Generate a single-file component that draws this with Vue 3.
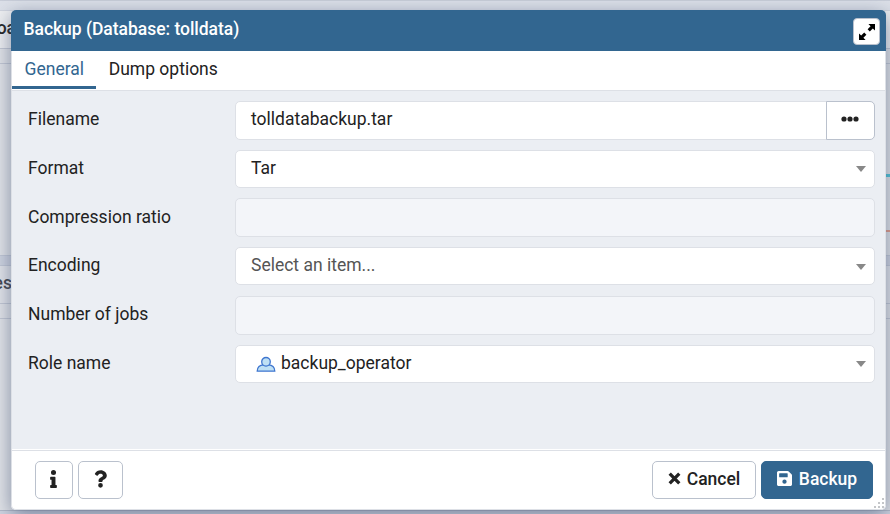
<script setup>
import { ref } from 'vue'

const tabs = ['General', 'Dump options']
const activeTab = ref('General')

const fields = [
  { label: 'Filename', type: 'file', value: 'tolldatabackup.tar' },
  { label: 'Format', type: 'select', value: 'Tar' },
  { label: 'Compression ratio', type: 'disabled' },
  { label: 'Encoding', type: 'select', placeholder: 'Select an item...' },
  { label: 'Number of jobs', type: 'disabled' },
  { label: 'Role name', type: 'select', value: 'backup_operator', icon: true },
]
</script>

<template>
  <div class="screen">
    <div class="backdrop">
      <div class="strip top"></div>
      <div class="panel-title first"><span>oa</span></div>
      <div class="gap-row"></div>
      <div class="chart"><i class="line teal"></i><i class="line red"></i></div>
      <div class="strip mid"></div>
      <div class="panel-title second"><span>es</span></div>
      <div class="gap-row"></div>
      <div class="chart last"></div>
      <div class="strip bottom"></div>
    </div>

    <div class="dialog">
      <header class="titlebar">
        <h1>Backup (Database: tolldata)</h1>
        <button class="maximize" aria-label="Maximize">
          <svg width="16" height="16" viewBox="0 0 16 16">
            <path d="M9.4 0H16v6.6l-2.2-2.2-3 3-2.2-2.2 3-3z" />
            <path d="M6.6 16H0V9.4l2.2 2.2 3-3 2.2 2.2-3 3z" />
          </svg>
        </button>
      </header>

      <nav class="tabs">
        <button
          v-for="tab in tabs"
          :key="tab"
          class="tab"
          :class="{ active: tab === activeTab }"
          @click="activeTab = tab"
        >{{ tab }}</button>
      </nav>

      <main class="form">
        <div v-for="f in fields" :key="f.label" class="row">
          <label>{{ f.label }}</label>
          <div class="control" :class="f.type">
            <svg v-if="f.icon" class="role" width="20" height="17" viewBox="0 0 20 17">
              <path d="M1.2 15.2c0-3.8 2.8-6.4 6-6.4h5.6c3.2 0 6 2.6 6 6.4z" />
              <circle cx="10" cy="5.8" r="4.3" />
            </svg>
            <span class="value" :class="{ placeholder: f.placeholder }">{{ f.value || f.placeholder }}</span>
            <svg v-if="f.type === 'select'" class="caret" width="10" height="6" viewBox="0 0 10 6">
              <path d="M0 0h10L5 6z" />
            </svg>
            <button v-if="f.type === 'file'" class="browse" aria-label="Browse">
              <svg width="18" height="6" viewBox="0 0 18 6">
                <circle cx="3" cy="3" r="2.6" /><circle cx="9" cy="3" r="2.6" /><circle cx="15" cy="3" r="2.6" />
              </svg>
            </button>
          </div>
        </div>
      </main>

      <footer class="footer">
        <button class="btn info" aria-label="Info">
          <svg width="7" height="18" viewBox="0 0 192 512">
            <path d="M20 424.2h20V279.8H20c-11 0-20-9-20-20V212c0-11 9-20 20-20h112c11 0 20 9 20 20v212.2h20c11 0 20 9 20 20V492c0 11-9 20-20 20H20c-11 0-20-9-20-20v-47.8c0-11 9-20 20-20zM96 0a72 72 0 1 0 0 144A72 72 0 1 0 96 0z" />
          </svg>
        </button>
        <button class="btn help" aria-label="Help">
          <svg width="13" height="18" viewBox="0 0 384 512">
            <path d="M202 0C122 0 70 33 29 91c-7 10-5 24 5 32l43 33c11 8 26 6 34-4 25-32 44-50 83-50 31 0 69 20 69 50 0 23-19 34-49 51-35 20-82 45-82 107v12c0 13 11 24 24 24h72c13 0 24-11 24-24v-6c0-43 126-45 126-161C378 67 287 0 202 0zM192 373a69 69 0 1 0 0 139 69 69 0 1 0 0-139z" />
          </svg>
        </button>
        <span class="spacer"></span>
        <button class="btn cancel">
          <svg width="13" height="13" viewBox="0 0 13 13">
            <path d="M1.7 1.7l9.6 9.6M11.3 1.7l-9.6 9.6" />
          </svg>
          <span>Cancel</span>
        </button>
        <button class="btn primary">
          <svg width="15" height="15" viewBox="0 0 16 16">
            <path fill-rule="evenodd" d="M1.7 0h9.6c.5 0 .9.2 1.2.5l3 3c.3.3.5.7.5 1.2v9.6c0 .9-.8 1.7-1.7 1.7H1.7C.8 16 0 15.2 0 14.3V1.7C0 .8.8 0 1.7 0zM2.9 2.3c-.4 0-.6.2-.6.6v3.2c0 .4.2.6.6.6h7.9c.4 0 .6-.2.6-.6V2.9c0-.4-.2-.6-.6-.6zM8 9.1a2.3 2.3 0 1 0 0 4.6 2.3 2.3 0 1 0 0-4.6z" />
          </svg>
          <span>Backup</span>
        </button>
      </footer>

      <svg class="grip" width="11" height="11" viewBox="0 0 11 11">
        <path d="M8 0h2v2H8zM4 4h2v2H4zM8 4h2v2H8zM0 8h2v2H0zM4 8h2v2H4zM8 8h2v2H8z" />
      </svg>
    </div>
  </div>
</template>

<style>
body {
  margin: 0;
  overflow: hidden;
}
</style>

<style scoped>
* {
  box-sizing: border-box;
}

.screen {
  position: relative;
  width: 890px;
  height: 514px;
  overflow: hidden;
  font-family: Roboto, sans-serif;
  font-size: 17.5px;
  line-height: 24px;
  color: #222;
}

button {
  font: inherit;
  color: inherit;
  padding: 0;
  margin: 0;
  background: #fff;
  border: 0;
}

svg {
  display: block;
  flex: none;
}

.backdrop {
  height: 514px;
  display: flex;
  flex-direction: column;
  background: #e2e4e8;
}

.strip {
  flex: none;
  background: #cfd4e0;
}

.strip.top {
  height: 11px;
  background: #dde1e9;
  border-top: 1px solid #c9ced9;
  border-bottom: 1px solid #d0d4de;
}

.strip.mid {
  height: 11px;
  border-top: 1px solid #c2c8d5;
  border-bottom: 1px solid #c2c8d5;
}

.strip.bottom {
  height: 4px;
  border-top: 1px solid #b4bac8;
}

.panel-title {
  flex: none;
  height: 38px;
  width: 100%;
  border-bottom: 1px solid #c3c8d3;
  background: #eeeff1;
  font-weight: 500;
}

.panel-title span {
  display: flex;
  justify-content: flex-end;
  padding-top: 5px;
}

.panel-title.first span {
  width: 16px;
}

.panel-title.second {
  background: #e2e4e9;
  color: #41454d;
}

.panel-title.second span {
  width: 12px;
}

.gap-row {
  flex: none;
  height: 15px;
  border-bottom: 1px solid #c3c8d3;
}

.chart {
  flex: none;
  height: 191px;
  display: flex;
  flex-direction: column;
  align-items: flex-end;
  padding-top: 110px;
  gap: 53px;
}

.chart.last {
  flex: 1;
  padding: 0;
}

.line {
  width: 6px;
  height: 2px;
}

.teal {
  height: 3px;
  background: #4cc3d6;
}

.red {
  background: #e59a85;
}

.dialog {
  position: absolute;
  left: 11px;
  top: 10px;
  width: 875px;
  height: 500px;
  display: flex;
  flex-direction: column;
  background: #fff;
  border-radius: 5px;
  box-shadow: inset 0 0 0 1px #dde0e6, 0 5px 20px rgba(65, 80, 115, 0.62);
}

.titlebar {
  flex: none;
  height: 41px;
  display: flex;
  align-items: center;
  justify-content: space-between;
  padding: 0 6px 0 12.5px;
  background: #326690;
  color: #fff;
  border-radius: 5px 5px 0 0;
}

h1 {
  margin: 0 0 4px;
  font-size: 17.5px;
  letter-spacing: -0.03px;
  font-weight: 500;
  white-space: nowrap;
}

.maximize {
  width: 27px;
  height: 27px;
  margin-top: 2px;
  display: flex;
  align-items: center;
  justify-content: center;
  border: 1px solid #bac1cd;
  border-radius: 4px;
}

.maximize svg {
  fill: #000;
}

.tabs {
  flex: none;
  display: flex;
  height: 40px;
  padding-left: 1px;
  border-bottom: 1px solid #dde0e6;
}

.tab {
  height: 38px;
  padding: 0 12px 2px 12.6px;
  background: none;
  white-space: nowrap;
}

.tab.active {
  color: #326690;
  padding-bottom: 0;
  border-bottom: 3px solid #326690;
}

.form {
  flex: none;
  height: 358px;
  margin: 0 1px;
  padding: 9.9px 10px 0 16px;
  background: #ebeef3;
}

.row {
  display: flex;
  height: 48.75px;
}

.row label {
  width: 207px;
  padding-top: 6.3px;
}

.control {
  display: flex;
  align-items: flex-start;
  width: 640px;
  height: 37.9px;
  padding: 5.3px 8px 0 15px;
  background: #fff;
  border: 1px solid #dde0e6;
  border-radius: 5px;
}

.control.file,
.control.disabled {
  height: 38.9px;
}

.control.disabled {
  background: #f3f5f9;
}

.control.file {
  padding-right: 0;
}

.value {
  flex: 1;
}

.placeholder {
  color: #555;
}

.role {
  margin: 5px 5px 0 5px;
  fill: #bfe0f4;
  stroke: #3f76cf;
  stroke-width: 1.3;
}

.caret {
  margin-top: 10.4px;
  fill: #888;
}

.browse {
  width: 49px;
  height: 39px;
  margin: -6.3px -1px 0 0;
  padding: 0 1px 3px 0;
  display: flex;
  align-items: center;
  justify-content: center;
  border: 1px solid #bac1cd;
  border-radius: 0 5px 5px 0;
  fill: #222;
}

.footer {
  flex: none;
  display: flex;
  align-items: flex-start;
  height: 60px;
  margin: 1px 0 0;
  padding: 10px 13px 0 24px;
  border-top: 1px solid #dde0e6;
}

.btn {
  height: 38px;
  display: flex;
  align-items: center;
  justify-content: center;
  padding-bottom: 3px;
  border: 1px solid #bac1cd;
  border-radius: 5px;
  font-weight: 500;
  fill: #222;
}

.info {
  width: 38px;
  padding-right: 1px;
}

.help {
  width: 45px;
  margin-left: 5px;
}

.spacer {
  flex: 1;
}

.cancel {
  width: 104px;
  gap: 6px;
  stroke: #222;
  stroke-width: 3.3;
}

.primary {
  width: 112px;
  margin-left: 5px;
  gap: 7px;
  background: #326690;
  border-color: #326690;
  color: #fff;
  fill: #fff;
}

.grip {
  position: absolute;
  right: 1px;
  bottom: 1px;
  fill: #c4c6c9;
}
</style>
